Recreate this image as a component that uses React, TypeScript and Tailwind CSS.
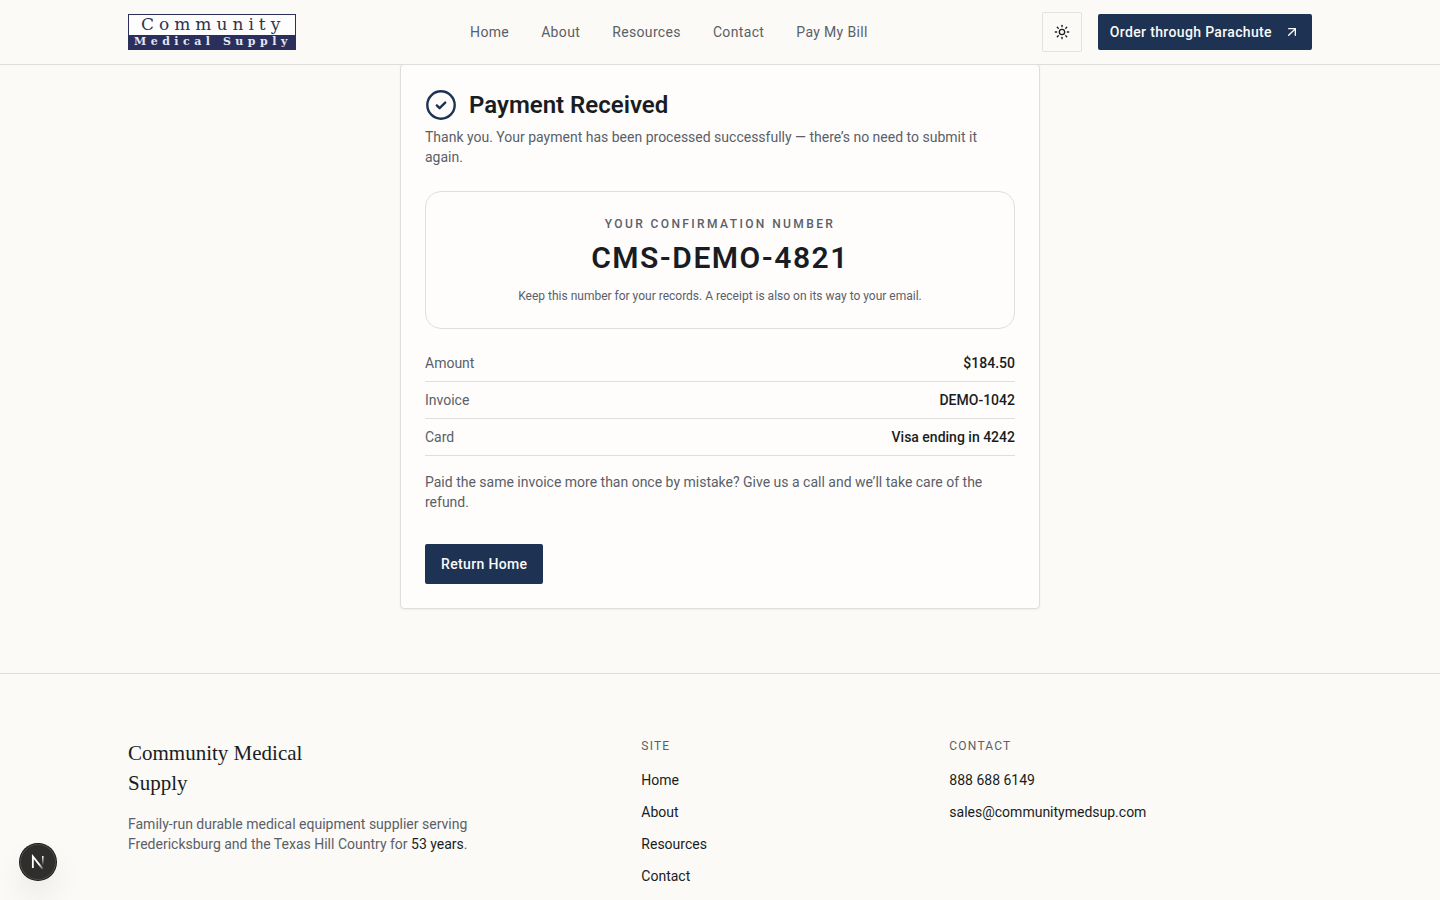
import { ArrowUpRight, Sun } from "lucide-react";

const navLinks = ["Home", "About", "Resources", "Contact", "Pay My Bill"];
const siteLinks = ["Home", "About", "Resources", "Contact"];

const details = [
  { label: "Amount", value: "$184.50" },
  { label: "Invoice", value: "DEMO-1042" },
  { label: "Card", value: "Visa ending in 4242" },
];

function Logo() {
  return (
    <a href="#" aria-label="Community Medical Supply" className="block shrink-0">
      <svg width="168" height="36" viewBox="0 0 168 36" className="block overflow-visible">
        <rect width="168" height="36" fill="#2a2f5c" />
        <rect x="1" y="1" width="166" height="20" fill="#fdfdfe" />
        <text x="13" y="16" fontFamily="'DejaVu Serif', serif" fontSize="17" letterSpacing="5" fill="#30344f">
          Community
        </text>
        <text
          x="6"
          y="31"
          fontFamily="'DejaVu Serif', serif"
          fontSize="11"
          fontWeight="bold"
          letterSpacing="4.5"
          fill="#e4e7f2"
        >
          Medical Supply
        </text>
      </svg>
    </a>
  );
}

function Header() {
  return (
    <header className="sticky top-0 z-10 border-b border-[#dededb] bg-[#fbfaf6]">
      <div className="mx-auto flex h-16 max-w-7xl items-center justify-between px-12">
        <Logo />
        <nav className="flex items-center gap-8 text-sm tracking-wide text-[#5a6068]">
          {navLinks.map((link) => (
            <a key={link} href="#">
              {link}
            </a>
          ))}
        </nav>
        <div className="flex items-center gap-4">
          <button
            type="button"
            aria-label="Toggle theme"
            className="flex size-10 items-center justify-center rounded-xs border border-[#e3e2de]"
          >
            <Sun className="size-4" />
          </button>
          <a
            href="#"
            className="flex h-9 items-center gap-3 rounded-xs bg-[#1e3354] px-3 text-sm font-medium tracking-wide text-[#fbfaf6]"
          >
            Order through Parachute
            <ArrowUpRight className="size-4" />
          </a>
        </div>
      </div>
    </header>
  );
}

function Receipt() {
  return (
    <section className="relative -mt-px w-full max-w-[640px] rounded-sm border border-[#dededb] bg-[#fefdfc] p-6 shadow-xs">
      <div className="flex items-center gap-3">
        <svg viewBox="0 0 32 32" fill="none" stroke="#1e3354" strokeLinecap="round" strokeLinejoin="round" className="size-8">
          <circle cx="16" cy="16" r="13.7" strokeWidth="2.4" />
          <path d="m11.8 16.4 2.8 2.8 5.6-5.6" strokeWidth="2.4" />
        </svg>
        <h1 className="text-2xl font-semibold">Payment Received</h1>
      </div>
      <p className="mt-1.5 max-w-[570px] text-sm text-[#5a6068]">
        Thank you. Your payment has been processed successfully — there’s no need to submit it again.
      </p>

      <div className="mt-6 rounded-2xl border border-[#dededb] p-6 text-center">
        <p className="text-xs font-medium tracking-[0.2em] text-[#5a6068] uppercase">Your confirmation number</p>
        <p className="mt-2 text-3xl font-semibold tracking-wider">CMS-DEMO-4821</p>
        <p className="mt-3 text-xs text-[#5a6068]">
          Keep this number for your records. A receipt is also on its way to your email.
        </p>
      </div>

      <dl className="mt-4 text-sm">
        {details.map((row) => (
          <div key={row.label} className="flex justify-between border-b border-[#dededb] py-2">
            <dt className="text-[#5a6068]">{row.label}</dt>
            <dd className="font-medium">{row.value}</dd>
          </div>
        ))}
      </dl>

      <p className="mt-4 max-w-[570px] text-sm text-[#5a6068]">
        Paid the same invoice more than once by mistake? Give us a call and we’ll take care of the refund.
      </p>
      <a
        href="#"
        className="mt-8 inline-flex h-10 items-center rounded-xs bg-[#1e3354] px-4 align-top text-sm font-medium tracking-wide text-[#fbfaf6]"
      >
        Return Home
      </a>
    </section>
  );
}

function Footer() {
  return (
    <footer className="border-t border-[#dededb]">
      <div className="mx-auto grid max-w-7xl grid-cols-12 gap-12 px-12 pt-16 pb-3">
        <div className="col-span-5">
          <h2 className="max-w-52 font-['Liberation_Serif',serif] text-[21px] leading-[30px]">
            Community Medical Supply
          </h2>
          <p className="mt-4 max-w-sm text-sm text-[#5a6068]">
            Family-run durable medical equipment supplier serving Fredericksburg and the Texas Hill Country for{" "}
            <span className="text-[#191d23]">53 years</span>.
          </p>
        </div>
        <div className="col-span-3">
          <h3 className="text-xs tracking-widest text-[#5a6068] uppercase">Site</h3>
          <ul className="mt-4 space-y-3 text-sm">
            {siteLinks.map((link) => (
              <li key={link}>
                <a href="#">{link}</a>
              </li>
            ))}
          </ul>
        </div>
        <div className="col-span-4">
          <h3 className="text-xs tracking-widest text-[#5a6068] uppercase">Contact</h3>
          <ul className="mt-4 space-y-3 text-sm">
            <li>
              <a href="tel:8886886149">888 688 6149</a>
            </li>
            <li>
              <a href="mailto:sales@communitymedsup.com">sales@communitymedsup.com</a>
            </li>
          </ul>
        </div>
      </div>
    </footer>
  );
}

function DevBadge() {
  return (
    <button
      type="button"
      aria-label="Open developer tools"
      className="fixed bottom-5 left-5 z-20 flex size-9 items-center justify-center rounded-full bg-[#2f2e2d] shadow-[0_0_0_1px_#171717,inset_0_0_0_1px_#4b4a49,0_16px_32px_-8px_rgba(0,0,0,0.24)]"
    >
      <svg width="16" height="16" viewBox="0 0 14 14" fill="none">
        <defs>
          <linearGradient id="stem" x1="11.5" y1="1.5" x2="11.5" y2="10" gradientUnits="userSpaceOnUse">
            <stop stopColor="#fff" />
            <stop offset="1" stopColor="#fff" stopOpacity="0" />
          </linearGradient>
          <linearGradient id="diagonal" x1="8" y1="9" x2="11.5" y2="13.5" gradientUnits="userSpaceOnUse">
            <stop stopColor="#fff" />
            <stop offset="1" stopColor="#fff" stopOpacity="0.1" />
          </linearGradient>
        </defs>
        <path d="M2.5 12.2V2.2l8.6 10.8" stroke="url(#diagonal)" strokeWidth="1.6" />
        <path d="M11.2 1.8v8.4" stroke="url(#stem)" strokeWidth="1.4" />
      </svg>
    </button>
  );
}

export default function App() {
  return (
    <div className="min-h-screen bg-[#fbfaf6] font-[Roboto,sans-serif] text-[#191d23] antialiased">
      <Header />
      <main className="flex justify-center pb-16">
        <Receipt />
      </main>
      <Footer />
      <DevBadge />
    </div>
  );
}
